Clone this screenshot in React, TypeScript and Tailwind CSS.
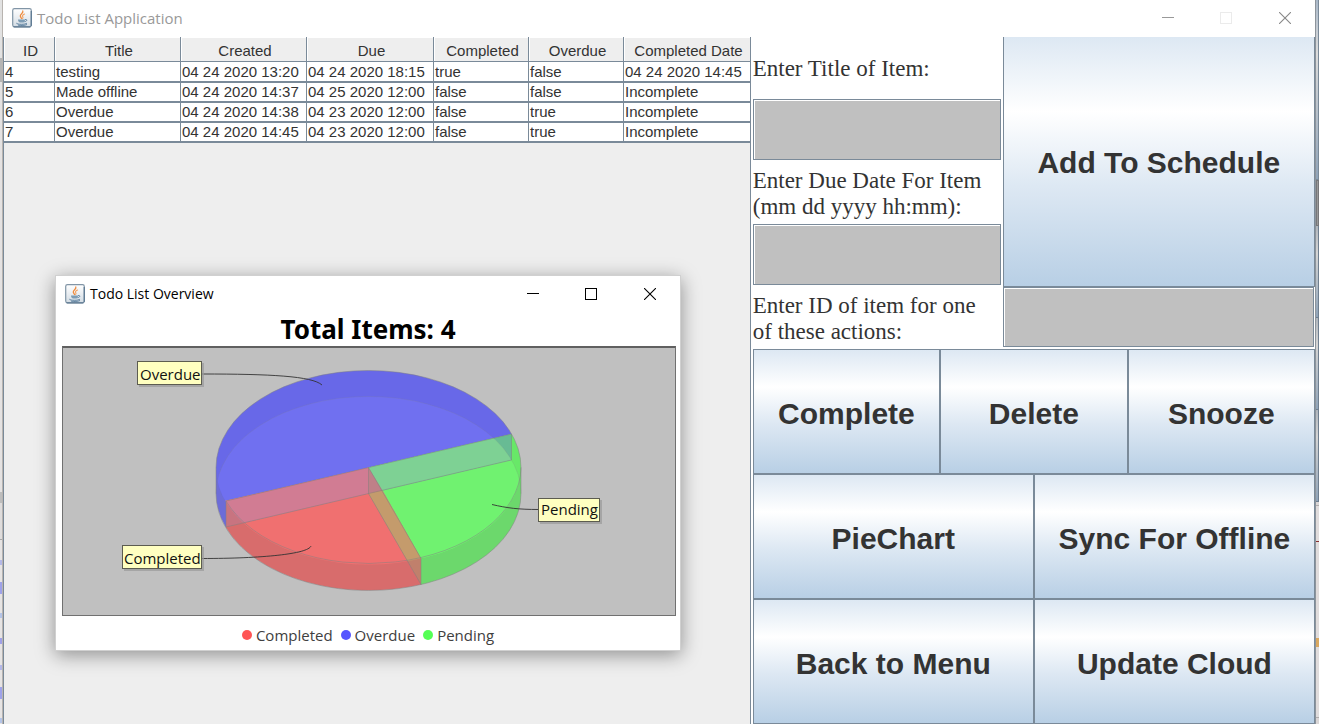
import React from "react";

const rows = [
  ["4", "testing", "04 24 2020 13:20", "04 24 2020 18:15", "true", "false", "04 24 2020 14:45"],
  ["5", "Made offline", "04 24 2020 14:37", "04 25 2020 12:00", "false", "false", "Incomplete"],
  ["6", "Overdue", "04 24 2020 14:38", "04 23 2020 12:00", "false", "true", "Incomplete"],
  ["7", "Overdue", "04 24 2020 14:45", "04 23 2020 12:00", "false", "true", "Incomplete"],
];

const columns = [
  { name: "ID", width: "w-[51px]" },
  { name: "Title", width: "w-[126px]" },
  { name: "Created", width: "w-[126px]" },
  { name: "Due", width: "w-[127px]" },
  { name: "Completed", width: "w-[95px]" },
  { name: "Overdue", width: "w-[95px]" },
  { name: "Completed Date", width: "w-[127px]" },
];

const legend = [
  { name: "Completed", color: "bg-[#ff5555]" },
  { name: "Overdue", color: "bg-[#5555ff]" },
  { name: "Pending", color: "bg-[#55ff55]" },
];

// Slivers of the windows behind, as [height, colour] from top to bottom.
const leftEdge: [number, string][] = [
  [58, "#e2e2e2"], [24, "#b5b5b5"], [410, "#e4e2e2"], [11, "#bdbdbd"], [36, "#dedcdc"], [1, "#a8a8a8"],
  [20, "#e6e4e4"], [5, "#b4b8e8"], [17, "#e6e4e4"], [12, "#9fa2ea"], [19, "#e6e4e4"], [5, "#b4c4e8"],
  [20, "#e6e4e4"], [6, "#a0a0e8"], [21, "#e6e4e4"], [5, "#b4b8e8"], [17, "#e6e4e4"], [12, "#9fa2ea"],
  [19, "#e6e4e4"], [5, "#b4c4e8"],
];

const rightEdge: [number, string][] = [
  [3, "#dad6d6"], [1, "#b0acac"], [35, "#e0dcdc"], [1, "#8a3030"], [96, "#e0dcdc"],
  [9, "#d9a860"], [70, "#e0dcdc"], [1, "#b0acac"],
];

function EdgeMarks({ marks }: { marks: [number, string][] }) {
  return (
    <>
      {marks.map(([height, background], index) => (
        <div key={index} className="shrink-0" style={{ height, background }} />
      ))}
    </>
  );
}

function JavaIcon({ id }: { id: string }) {
  return (
    <svg width="20" height="20" viewBox="0 0 20 20" aria-hidden="true" className="shrink-0">
      <defs>
        <linearGradient id={id} x1="0" y1="0" x2="0" y2="1">
          <stop offset="0" stopColor="#ffffff" />
          <stop offset="1" stopColor="#d3dce4" />
        </linearGradient>
      </defs>
      <rect x="0.7" y="0.7" width="18.6" height="18.2" rx="1.8" fill={`url(#${id})`} stroke="#8195a6" strokeWidth="1.2" />
      <path d="M1.5 18.9H18.5M19.2 3V18" stroke="#4f6f8a" strokeWidth="1" />
      <path d="M10.800 3C11.700 5.200 7.800 6.100 8.300 8.200C8.500 9.100 9.300 9.700 9.600 10.500" fill="none" stroke="#ef8a3c" strokeWidth="1.3" strokeLinecap="round" />
      <path d="M12.500 6C10.400 7 10 7.900 10.800 8.800C11.200 9.300 11 9.900 10.600 10.400" fill="none" stroke="#f3a262" strokeWidth="1.1" strokeLinecap="round" />
      <path d="M6 11.400H13C13 13 12.500 14 11.500 14.400H7.800C6.700 14 6 13 6 11.400Z" fill="#7d9cb4" />
      <path d="M13 11.600C15.600 11 15.400 13.200 12.500 13.800" fill="none" stroke="#54799a" strokeWidth="0.9" />
      <path d="M4.300 15.100C5 16.700 13.500 16.700 15 15.100M6 17.100C8.500 17.800 13.500 17.500 15 16.500" fill="none" stroke="#54799a" strokeWidth="0.9" />
    </svg>
  );
}

function WindowButtons({ line, box, cross }: { line: string; box: string; cross: string }) {
  return (
    <div className="ml-auto flex h-full">
      <button type="button" aria-label="Minimize" className="flex w-[58px] items-center justify-center">
        <svg width="12" height="12" viewBox="0 0 12 12"><path d="M0 5.500H12" stroke={line} /></svg>
      </button>
      <button type="button" aria-label="Maximize" className="flex w-[58px] items-center justify-center">
        <svg width="12" height="12" viewBox="0 0 12 12"><rect x="0.500" y="0.500" width="11" height="11" fill="none" stroke={box} /></svg>
      </button>
      <button type="button" aria-label="Close" className="flex w-[60px] items-center justify-center">
        <svg width="12" height="12" viewBox="0 0 12 12"><path d="M0 0L12 12M12 0L0 12" stroke={cross} strokeWidth="1.100" /></svg>
      </button>
    </div>
  );
}

function ActionButton({ label, className }: { label: string; className: string }) {
  return (
    <button
      type="button"
      className={`min-w-0 border-[#7a8a99] bg-[linear-gradient(180deg,#dde8f3_0%,#ffffff_30%,#dde8f3_60%,#b8cfe5_100%)] pt-1 text-center text-[30px] leading-9 font-bold whitespace-nowrap text-[#333333] ${className}`}
    >
      {label}
    </button>
  );
}

const fieldStyle =
  "block h-full w-full border border-[#7a8a99] bg-[#c0c0c0] px-2 text-[23px] text-[#333333] shadow-[inset_1px_1px_0_#ffffff] outline-none";
const labelStyle = "flex items-center pt-[2px] font-['Liberation_Serif',serif] text-[23px] leading-[26px] text-[#333333]";

function Callout({ x, y, w, text, tx, ty }: { x: number; y: number; w: number; text: string; tx: number; ty: number }) {
  return (
    <g>
      <rect x={x + 2} y={y + 2} width={w} height="24" fill="#9a9a9a" opacity="0.700" />
      <rect x={x + 0.5} y={y + 0.5} width={w - 1} height="23" fill="#ffffc0" stroke="#5c5c50" />
      <text x={tx} y={ty} fontSize="15" fill="#111111">{text}</text>
    </g>
  );
}

function PieChart() {
  const lower = { cx: 368.5, cy: 493.5, rx: 152.5, ry: 97 };
  const upper = { cx: 368.5, cy: 467.5, rx: 152.5, ry: 97 };
  return (
    <svg viewBox="63 348 612 267" className="block w-full font-['Open_Sans',sans-serif]" role="img" aria-label="Items by status">
      <defs>
        <clipPath id="upperFace"><ellipse {...upper} /></clipPath>
        <clipPath id="lowerFace"><ellipse {...lower} /></clipPath>
      </defs>
      {/* side walls */}
      <path d="M216 467.500V493.500A152.500 97 0 0 0 226 527.500V501.500Z" fill="#6c6cd8" />
      <path d="M226 501.500V527.500A152.500 97 0 0 0 421 584.500V558.500Z" fill="#d86c6c" />
      <path d="M421 558.500V584.500A152.500 97 0 0 0 521 493.500V467.500Z" fill="#6cd86c" />
      {/* upper faces */}
      <g clipPath="url(#upperFace)">
        <path d="M368.500 467.500L180 511V350H560V423Z" fill="#6868e8" />
        <path d="M368.500 467.500L180 511V600H446Z" fill="#f07070" />
        <path d="M368.500 467.500L560 423V600H445Z" fill="#68e868" />
        <g clipPath="url(#lowerFace)">
          <path d="M368.500 467.500L180 511V350H560V423Z" fill="#7070f0" />
          <path d="M368.500 467.500L560 423V600H445Z" fill="#70f270" />
        </g>
      </g>
      {/* inner walls seen through the faces */}
      <path d="M368.500 467.500L511.500 434V460L382.500 490.500Z" fill="#68bb94" />
      <path d="M368.500 467.500L511.500 434V460L382.500 490.500Z" fill="#7ed194" clipPath="url(#lowerFace)" />
      <path d="M368.500 467.500L226 501V527L368.500 493.500Z" fill="#c87480" />
      <path d="M368.500 467.500L226 501V527L368.500 493.500Z" fill="#d17c93" clipPath="url(#upperFace)" />
      <path d="M368.500 467.500V493.500L382.500 490.500Z" fill="#bf8088" />
      <path d="M368.500 493.500L382.500 490.500L421 558.500V584.500Z" fill="#c0806c" />
      <path d="M368.500 493.500L382.500 490.500L421 558.500V584.500Z" fill="#c49b6c" clipPath="url(#upperFace)" />
      {/* outlines */}
      <g fill="none" stroke="#808080" strokeOpacity="0.550" strokeWidth="0.900">
        <path d="M216 493.500V467.500A152.500 97 0 0 1 521 467.500V493.500A152.500 97 0 0 1 216 493.500" />
        <path d="M226 501A152.500 97 0 0 0 521 467.500" />
        <path d="M216 493.500A152.500 97 0 0 1 521 493.500" strokeOpacity="0.200" />
        <path d="M226 527V501L511.500 434V460L226 527M368.500 467.500V493.500L421 584.500V558.500Z" />
      </g>
      {/* leader lines */}
      <g fill="none" stroke="#333333" strokeWidth="0.900">
        <path d="M202 374C270 374 312 376 322 385" />
        <path d="M202 558.500C262 558.500 308 554 311 546" />
        <path d="M539 509.500C518 509.500 507 508 492 504.500" />
      </g>
      <Callout x={137} y={361} w={65} text="Overdue" tx={140} ty={380} />
      <Callout x={122} y={545} w={80} text="Completed" tx={124} ty={564} />
      <Callout x={538} y={498} w={62} text="Pending" tx={541} ty={515} />
    </svg>
  );
}

function OverviewWindow() {
  return (
    <section
      aria-label="Todo List Overview"
      className="absolute top-[275px] left-[52px] w-[626px] border border-[#d0d0d0] bg-white shadow-[0_4px_18px_rgba(0,0,0,0.4)]"
    >
      <header className="flex h-9 items-center pl-[9px]">
        <JavaIcon id="overviewIcon" />
        <h2 className="ml-[5px] font-['Open_Sans',sans-serif] text-[14px] leading-5 text-black">Todo List Overview</h2>
        <WindowButtons line="#000000" box="#000000" cross="#000000" />
      </header>
      <h3 className="h-[34px] text-center font-['Noto_Sans',sans-serif] text-[26px] leading-[34px] font-bold text-black">
        Total Items: 4
      </h3>
      <div className="mr-1 ml-[6px] border border-t-2 border-[#707070] border-t-[#606060] bg-[#c0c0c0]">
        <PieChart />
      </div>
      <ul className="flex h-[34px] items-center justify-center gap-2 pt-1 font-['Open_Sans',sans-serif] text-[15px] leading-5 text-[#404040]">
        {legend.map((item) => (
          <li key={item.name} className="flex items-center gap-1">
            <span className={`size-[10px] rounded-full ${item.color}`} />
            {item.name}
          </li>
        ))}
      </ul>
    </section>
  );
}

export default function App() {
  return (
    <div className="flex h-screen min-h-[600px] overflow-hidden bg-[#dedada] font-['Liberation_Sans',Arial,sans-serif]">
      <div className="flex w-[3px] shrink-0 flex-col border-r border-[#b8b4b0] bg-[#e4e2e2]">
        <EdgeMarks marks={leftEdge} />
      </div>
      <main className="relative flex min-w-0 flex-1 flex-col bg-white">
        <header className="flex h-[37px] shrink-0 items-center bg-white pb-[2px] pl-[9px]">
          <JavaIcon id="applicationIcon" />
          <h1 className="ml-[5px] font-['Open_Sans',sans-serif] text-[15px] leading-5 text-[#999999]">Todo List Application</h1>
          <WindowButtons line="#999999" box="#ebebeb" cross="#888888" />
        </header>
        <div className="flex min-h-0 flex-1">
          <div className="min-w-0 flex-[748_1_0%] border-x border-[#7a8a99] bg-[#eeeeee]">
            <table className="w-full table-fixed border-separate border-spacing-0 text-[15px] text-[#333333]">
              <thead>
                <tr>
                  {columns.map((column) => (
                    <th
                      key={column.name}
                      scope="col"
                      className={`h-[25px] border-r border-b border-[#7a8a99] bg-[#eeeeee] p-0 pt-1 pl-[3px] text-center leading-5 font-normal whitespace-nowrap shadow-[inset_1px_1px_0_#ffffff] ${column.width}`}
                    >
                      {column.name}
                    </th>
                  ))}
                </tr>
              </thead>
              <tbody>
                {rows.map((row) => (
                  <tr key={row[0]} className="group">
                    {row.map((cell, index) => (
                      <td
                        key={columns[index].name}
                        className="h-5 border-r border-b-2 border-[#7a8a99] bg-white p-0 pl-px leading-[18px] whitespace-nowrap group-first:pt-px"
                      >
                        {cell}
                      </td>
                    ))}
                  </tr>
                ))}
              </tbody>
            </table>
          </div>
          <form
            className="grid min-w-0 flex-[564_1_0%] grid-cols-18 grid-rows-[repeat(11,minmax(0,1fr))] bg-white pl-[2px]"
            onSubmit={(event) => event.preventDefault()}
          >
            <label htmlFor="itemTitle" className={`col-span-8 ${labelStyle}`}>Enter Title of Item:</label>
            <ActionButton label="Add To Schedule" className="col-span-10 row-span-4 border border-t-0" />
            <div className="col-span-8 pr-[2px] pb-[2px]">
              <input id="itemTitle" className={fieldStyle} />
            </div>
            <label htmlFor="itemDue" className={`col-span-8 ${labelStyle}`}>
              <span>Enter Due Date For Item<br />(mm dd yyyy hh:mm):</span>
            </label>
            <div className="col-span-8 pr-[2px] pb-[2px]">
              <input id="itemDue" className={fieldStyle} />
            </div>
            <label htmlFor="itemId" className={`col-span-8 ${labelStyle}`}>
              <span>Enter ID of item for one<br />of these actions:</span>
            </label>
            <div className="col-span-10 pr-px pb-[2px]">
              <input id="itemId" className={fieldStyle} />
            </div>
            <ActionButton label="Complete" className="col-span-6 row-span-2 border" />
            <ActionButton label="Delete" className="col-span-6 row-span-2 border" />
            <ActionButton label="Snooze" className="col-span-6 row-span-2 border" />
            <ActionButton label="PieChart" className="col-span-9 row-span-2 border" />
            <ActionButton label="Sync For Offline" className="col-span-9 row-span-2 border" />
            <ActionButton label="Back to Menu" className="col-span-9 row-span-2 border" />
            <ActionButton label="Update Cloud" className="col-span-9 row-span-2 border" />
          </form>
        </div>
        <OverviewWindow />
      </main>
      {/* edge of the window behind */}
      <div className="flex w-1 shrink-0 flex-col border-l border-[#8d949b] bg-[#dad6d6]">
        <div className="h-[180px] shrink-0 border-r border-b border-[#7a8a99] bg-[linear-gradient(180deg,#a9b8c8,#dcdcdc_30%,#8fa3b8)]" />
        <div className="h-[46px] shrink-0 border border-[#77777a] bg-[#999999]" />
        <div className="h-[92px] shrink-0 border-r border-b border-[#6f7f90] bg-[linear-gradient(180deg,#b0b6bd,#d5d5d5_30%,#8fa3b8)]" />
        <div className="h-[92px] shrink-0 border-r border-b border-[#6f7f90] bg-[linear-gradient(180deg,#b0b6bd,#d5d5d5_30%,#8fa3b8)]" />
        <div className="h-[92px] shrink-0 border-r border-b border-[#6f7f90] bg-[linear-gradient(180deg,#b0b6bd,#d5d5d5_30%,#8fa3b8)]" />
        <EdgeMarks marks={rightEdge} />
      </div>
    </div>
  );
}
